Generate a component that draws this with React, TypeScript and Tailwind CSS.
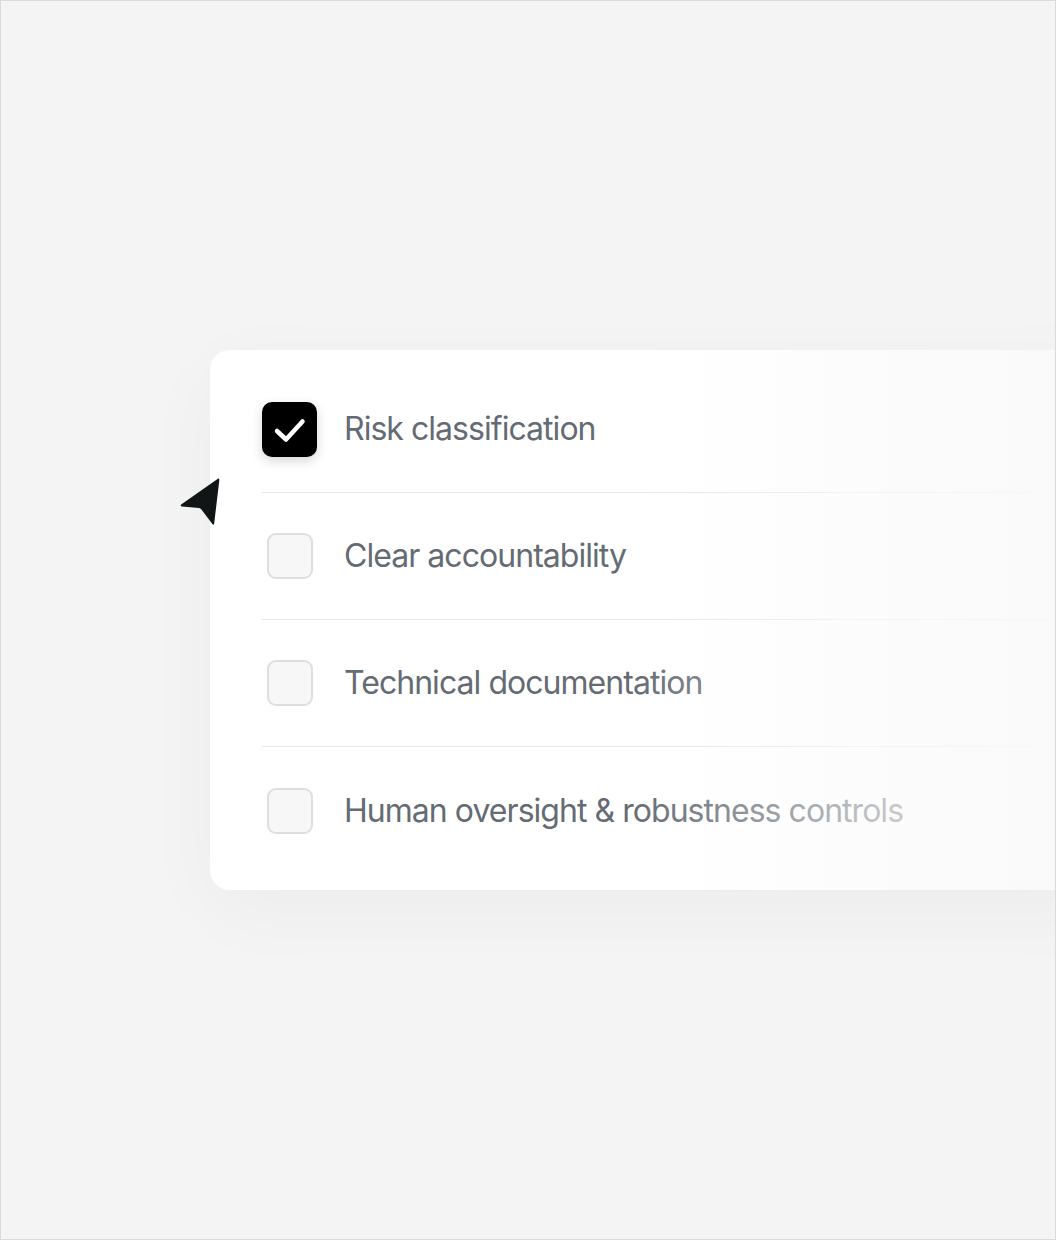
import React from 'react';

const items = [
  { label: 'Risk classification', checked: true },
  { label: 'Clear accountability', checked: false },
  { label: 'Technical documentation', checked: false },
  { label: 'Human oversight & robustness controls', checked: false },
];

const Cursor = () => (
  <svg width="44" height="52" viewBox="0 0 44 52" className="absolute left-[177px] top-[475px]">
    <path
      d="M3.5 28.2 L39.2 3.2 Q41.6 1.6 41.3 4.4 L36.2 47.2 Q35.8 50 34.2 47.8 L23.4 33.4 Q22.4 32.2 21 32 L4 30.6 Q1.4 30 3.5 28.2 Z"
      fill="#111515"
    />
  </svg>
);

const Checkbox = ({ checked }: { checked: boolean }) =>
  checked ? (
    <div className="h-[55px] w-[55px] rounded-[10px] bg-black shadow-[0_4px_12px_rgba(0,0,0,0.16)]">
      <svg width="55" height="55" viewBox="0 0 55 55" fill="none">
        <path d="M15 29 L24 37.5 L40.5 19.5" stroke="white" strokeWidth="4.5" strokeLinecap="round" strokeLinejoin="round" />
      </svg>
    </div>
  ) : (
    <div className="h-[46px] w-[46px] rounded-[9px] border-2 border-[#dedede] bg-[#f7f7f7]" />
  );

export default function App() {
  return (
    <div className="relative h-[1240px] w-[1056px] overflow-hidden border border-[#dadada] bg-[#f4f4f4] pl-[209px] pt-[349px] font-['Inter',sans-serif]">
      <div className="relative w-[900px] rounded-l-[20px] bg-gradient-to-r from-white via-white via-60% to-[#f9f9f9] py-4 pl-[52px] shadow-[0_20px_80px_rgba(0,0,0,0.035)]">
        {items.map((item, i) => (
          <div
            key={item.label}
            className={`flex h-[127px] items-center ${i < items.length - 1 ? 'border-b border-[#e6e6e6]' : ''}`}
          >
            <div className="flex w-[55px] justify-center">
              <Checkbox checked={item.checked} />
            </div>
            <span className="ml-[27px] text-[32px] tracking-[-0.03em] text-[#646b73]">{item.label}</span>
          </div>
        ))}
        <div className="pointer-events-none absolute inset-y-0 right-0 w-[480px] bg-gradient-to-r from-transparent via-[#fcfcfc]/60 to-[#f9f9f9]" />
      </div>
      <Cursor />
    </div>
  );
}
